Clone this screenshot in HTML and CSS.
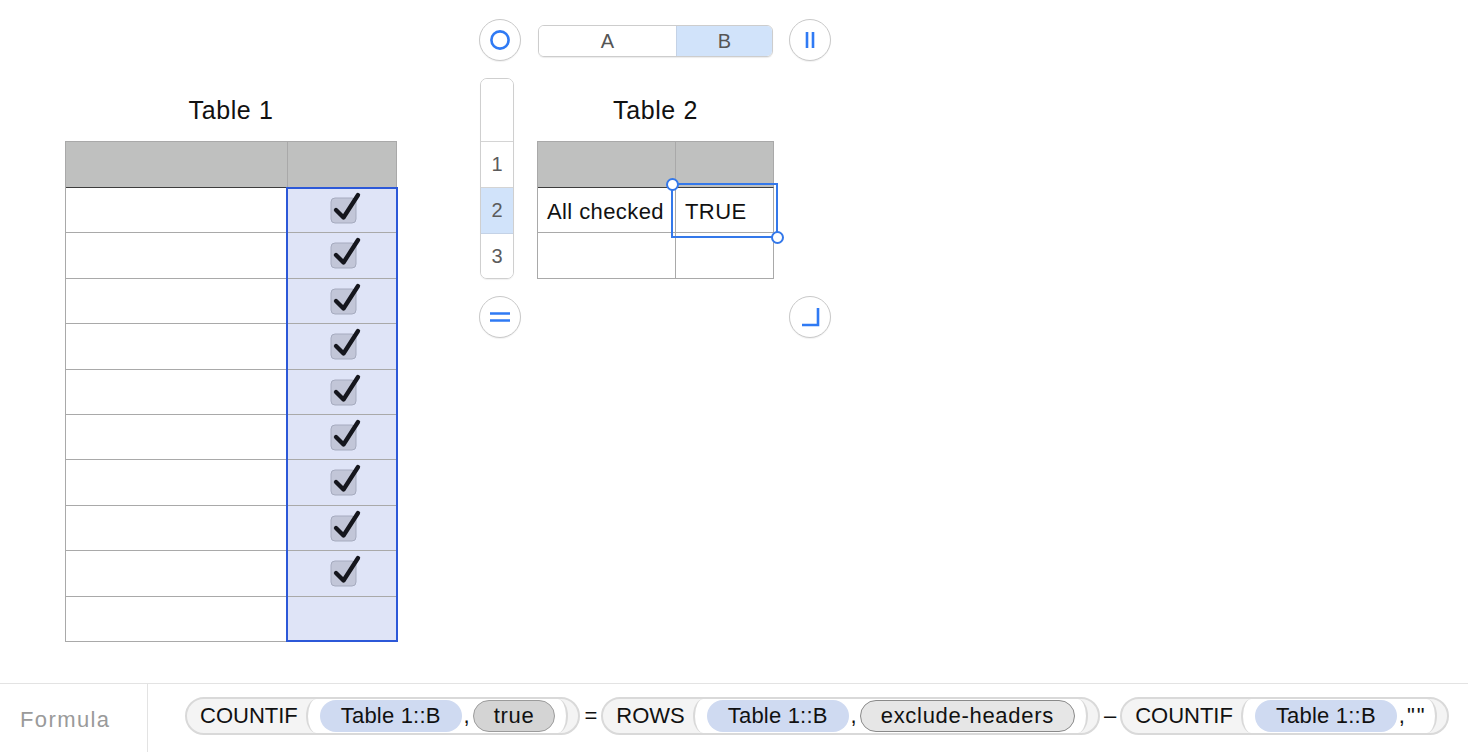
FILE: index.html
```html
<!DOCTYPE html>
<html lang="en">
<head>
<meta charset="utf-8">
<title>Tables</title>
<link rel="stylesheet" href="styles.css">
</head>
<body>
<main class="canvas">
  <section class="sheet sheet1">
    <div class="title">Table 1</div>
    <div class="table t1">
      <div class="row head"><div class="cell c1"></div><div class="cell c2"></div></div>
      <div class="row"><div class="cell c1"></div><div class="cell c2 sel"><svg class="chk" viewBox="0 0 32 34" width="32" height="34"><rect x="1" y="6" width="25" height="25" rx="4"/><path d="M6 18 L13.5 25.5 L28 3"/></svg></div></div>
      <div class="row"><div class="cell c1"></div><div class="cell c2 sel"><svg class="chk" viewBox="0 0 32 34" width="32" height="34"><rect x="1" y="6" width="25" height="25" rx="4"/><path d="M6 18 L13.5 25.5 L28 3"/></svg></div></div>
      <div class="row"><div class="cell c1"></div><div class="cell c2 sel"><svg class="chk" viewBox="0 0 32 34" width="32" height="34"><rect x="1" y="6" width="25" height="25" rx="4"/><path d="M6 18 L13.5 25.5 L28 3"/></svg></div></div>
      <div class="row"><div class="cell c1"></div><div class="cell c2 sel"><svg class="chk" viewBox="0 0 32 34" width="32" height="34"><rect x="1" y="6" width="25" height="25" rx="4"/><path d="M6 18 L13.5 25.5 L28 3"/></svg></div></div>
      <div class="row"><div class="cell c1"></div><div class="cell c2 sel"><svg class="chk" viewBox="0 0 32 34" width="32" height="34"><rect x="1" y="6" width="25" height="25" rx="4"/><path d="M6 18 L13.5 25.5 L28 3"/></svg></div></div>
      <div class="row"><div class="cell c1"></div><div class="cell c2 sel"><svg class="chk" viewBox="0 0 32 34" width="32" height="34"><rect x="1" y="6" width="25" height="25" rx="4"/><path d="M6 18 L13.5 25.5 L28 3"/></svg></div></div>
      <div class="row"><div class="cell c1"></div><div class="cell c2 sel"><svg class="chk" viewBox="0 0 32 34" width="32" height="34"><rect x="1" y="6" width="25" height="25" rx="4"/><path d="M6 18 L13.5 25.5 L28 3"/></svg></div></div>
      <div class="row"><div class="cell c1"></div><div class="cell c2 sel"><svg class="chk" viewBox="0 0 32 34" width="32" height="34"><rect x="1" y="6" width="25" height="25" rx="4"/><path d="M6 18 L13.5 25.5 L28 3"/></svg></div></div>
      <div class="row"><div class="cell c1"></div><div class="cell c2 sel"><svg class="chk" viewBox="0 0 32 34" width="32" height="34"><rect x="1" y="6" width="25" height="25" rx="4"/><path d="M6 18 L13.5 25.5 L28 3"/></svg></div></div>
      <div class="row"><div class="cell c1"></div><div class="cell c2 sel"></div></div>
      <div class="col-sel"></div>
    </div>
  </section>

  <section class="t2wrap">
    <button class="circ"><svg viewBox="0 0 24 24" width="24" height="24"><circle cx="12" cy="12" r="8.6"/></svg></button>
    <div class="colhdr"><span class="seg">A</span><span class="seg on">B</span></div>
    <button class="circ"><svg viewBox="0 0 24 24" width="24" height="24"><path d="M9 4 V20 M15 4 V20"/></svg></button>

    <div class="rowhdr">
      <div class="rh top"></div>
      <div class="rh">1</div>
      <div class="rh on">2</div>
      <div class="rh last">3</div>
    </div>
    <div class="sheet sheet2">
      <div class="title">Table 2</div>
      <div class="table t2">
        <div class="row head"><div class="cell c1"></div><div class="cell c2"></div></div>
        <div class="row"><div class="cell c1 txt">All checked</div><div class="cell c2 txt">TRUE</div></div>
        <div class="row"><div class="cell c1"></div><div class="cell c2"></div></div>
        <div class="cell-sel"></div>
        <div class="handle h-tl"></div>
        <div class="handle h-br"></div>
      </div>
    </div>
    <div class="spacer"></div>

    <button class="circ"><svg viewBox="0 0 24 24" width="24" height="24"><path d="M2 8.5 H22 M2 15.5 H22"/></svg></button>
    <div class="spacer"></div>
    <button class="circ"><svg viewBox="0 0 24 24" width="24" height="24"><path d="M20 3 V20 H4"/></svg></button>
  </section>
</main>

<footer class="formula-bar">
  <div class="label">Formula</div>
  <div class="expr">
    <span class="fn"><span class="name">COUNTIF</span><span class="args"><span class="ref">Table 1::B</span><span class="sep">,</span><span class="lit">true</span></span></span>
    <span class="op">=</span>
    <span class="fn"><span class="name">ROWS</span><span class="args"><span class="ref">Table 1::B</span><span class="sep">,</span><span class="lit lit2">exclude-headers</span></span></span>
    <span class="op">–</span>
    <span class="fn"><span class="name">COUNTIF</span><span class="args tight"><span class="ref">Table 1::B</span><span class="sep q">,""</span></span></span>
  </div>
</footer>
</body>
</html>
```

FILE: styles.css
```css
html, body {
  margin: 0;
  padding: 0;
  background: #ffffff;
  font-family: "Liberation Sans", Helvetica, Arial, sans-serif;
  color: #111;
}

.canvas {
  height: 683px;
  box-sizing: border-box;
  padding: 19px 0 0 65px;
  display: flex;
  align-items: flex-start;
}

/* ---------- sheets ---------- */
.sheet1 {
  margin-top: 59px;
  width: 332px;
}

.title {
  height: 63px;
  display: flex;
  align-items: center;
  justify-content: center;
  font-size: 25px;
  letter-spacing: 0.6px;
  padding-top: 2px;
  box-sizing: border-box;
  color: #111;
}

.table {
  position: relative;
  border-left: 1px solid #a9a9a9;
  border-top: 1px solid #a9a9a9;
}

.row {
  display: flex;
  height: 45.4px;
  box-sizing: border-box;
}

.row.head {
  height: 46px;
}

.cell {
  box-sizing: border-box;
  border-right: 1px solid #a9a9a9;
  border-bottom: 1px solid #a9a9a9;
  background: #fff;
}

.head .cell {
  background: #bfc0bf;
  border-bottom-color: #3d3d3d;
}

.t1 .c1 { width: 222px; }
.t1 .c2 { width: 109px; }

.cell.sel {
  background: #dfe4f7;
  padding: 4px 0 0 42px;
}

.chk {
  display: block;
}
.chk rect {
  fill: #c2c6d8;
  stroke: #a6abbf;
  stroke-width: 1;
}
.chk path {
  fill: none;
  stroke: #15161d;
  stroke-width: 4.3;
  stroke-linecap: round;
  stroke-linejoin: round;
}

.col-sel {
  position: absolute;
  left: 220px;
  top: 45px;
  width: 112px;
  height: 455px;
  box-sizing: border-box;
  border: 2px solid #2c58d8;
  pointer-events: none;
}

/* ---------- table 2 with controls ---------- */
.t2wrap {
  margin-left: 82px;
  display: grid;
  grid-template-columns: 42px 236px 42px;
  grid-template-rows: 42px 201px 42px;
  column-gap: 16px;
  row-gap: 17px;
}

.circ {
  width: 42px;
  height: 42px;
  padding: 0;
  border-radius: 50%;
  border: 1.5px solid #c9c9c9;
  background: #fff;
  box-shadow: 0 1px 1px rgba(0,0,0,0.06);
  display: flex;
  align-items: center;
  justify-content: center;
  box-sizing: border-box;
}

.circ svg {
  display: block;
  fill: none;
  stroke: #2f7af4;
  stroke-width: 2.6;
}

.colhdr {
  margin: 6px 0 4px 1px;
  display: flex;
  border: 1px solid #cdcdcd;
  border-radius: 6px;
  overflow: hidden;
  box-shadow: 0 1px 1px rgba(0,0,0,0.08);
  box-sizing: border-box;
}

.seg {
  display: flex;
  align-items: center;
  justify-content: center;
  font-size: 20px;
  color: #555;
  background: #fff;
}
.seg:first-child {
  width: 137px;
  border-right: 1px solid #c4d2e6;
}
.seg.on {
  flex: 1;
  background: #d1e3fa;
}

.rowhdr {
  margin-left: 1px;
  width: 34px;
  height: 201px;
  border: 1px solid #cfcfcf;
  border-radius: 7px;
  overflow: hidden;
  box-sizing: border-box;
  display: flex;
  flex-direction: column;
  box-shadow: 0 1px 1px rgba(0,0,0,0.06);
}

.rh {
  height: 46px;
  border-bottom: 1px solid #d4d4d4;
  box-sizing: border-box;
  display: flex;
  align-items: center;
  justify-content: center;
  font-size: 20px;
  color: #5b5b5b;
  background: #fff;
}
.rh.top { height: 63px; }
.rh.on { background: #d1e3fa; border-bottom-color: #c4d2e6; }
.rh.last { border-bottom: none; flex: 1; }

.sheet2 {
  width: 237px;
}

.t2 .c1 { width: 138px; }
.t2 .c2 { width: 98px; }

.txt {
  display: flex;
  align-items: center;
  font-size: 22px;
  letter-spacing: 0.4px;
  color: #111;
  padding: 3px 0 0 9px;
  white-space: nowrap;
}

.cell-sel {
  position: absolute;
  left: 133px;
  top: 41px;
  width: 107px;
  height: 55px;
  box-sizing: border-box;
  border: 2px solid #3478ea;
}

.handle {
  position: absolute;
  width: 13px;
  height: 13px;
  box-sizing: border-box;
  border-radius: 50%;
  border: 2px solid #3478ea;
  background: #fff;
}
.h-tl { left: 127.5px; top: 35.5px; }
.h-br { left: 232.5px; top: 88.5px; }

/* ---------- formula bar ---------- */
.formula-bar {
  height: 69px;
  box-sizing: border-box;
  border-top: 1.5px solid #e3e3e3;
  display: flex;
}

.label {
  width: 148px;
  box-sizing: border-box;
  border-right: 1.5px solid #e3e3e3;
  padding-left: 20px;
  display: flex;
  align-items: center;
  font-size: 22px;
  letter-spacing: 1.4px;
  color: #9a9a9a;
  padding-top: 4px;
}

.expr {
  display: flex;
  align-items: center;
  padding: 0 0 4px 37px;
  font-size: 22px;
  color: #111;
  white-space: nowrap;
}

.fn {
  display: inline-flex;
  align-items: stretch;
  height: 38px;
  box-sizing: border-box;
  border: 2px solid #d9d9d9;
  border-radius: 19px;
  background: #f4f4f4;
  padding: 0 10px 0 13px;
}

.fn .name {
  display: flex;
  align-items: center;
  background: transparent;
}

.args {
  display: flex;
  align-items: center;
  margin-left: 8px;
  padding: 0 11px 0 12px;
  background: #fff;
  border-left: 2px solid #d9d9d9;
  border-right: 2px solid #d9d9d9;
  border-radius: 11px / 18px;
}
.args.tight { padding-right: 5px; }

.ref {
  display: flex;
  align-items: center;
  height: 32px;
  padding: 0 21px;
  border-radius: 16px;
  background: #cfdaf1;
  letter-spacing: 0.2px;
}

.sep {
  padding: 0 3px 0 2px;
}
.sep.q {
  letter-spacing: 2px;
}

.lit {
  display: flex;
  align-items: center;
  height: 32px;
  box-sizing: border-box;
  padding: 0 20px;
  border-radius: 16px;
  background: #d4d4d4;
  border: 1.5px solid #9c9c9c;
  letter-spacing: 0.7px;
}
.lit.lit2 {
  background: #e6e6e6;
  border-color: #8a8a8a;
}

.op {
  padding: 0 4px;
}
```
